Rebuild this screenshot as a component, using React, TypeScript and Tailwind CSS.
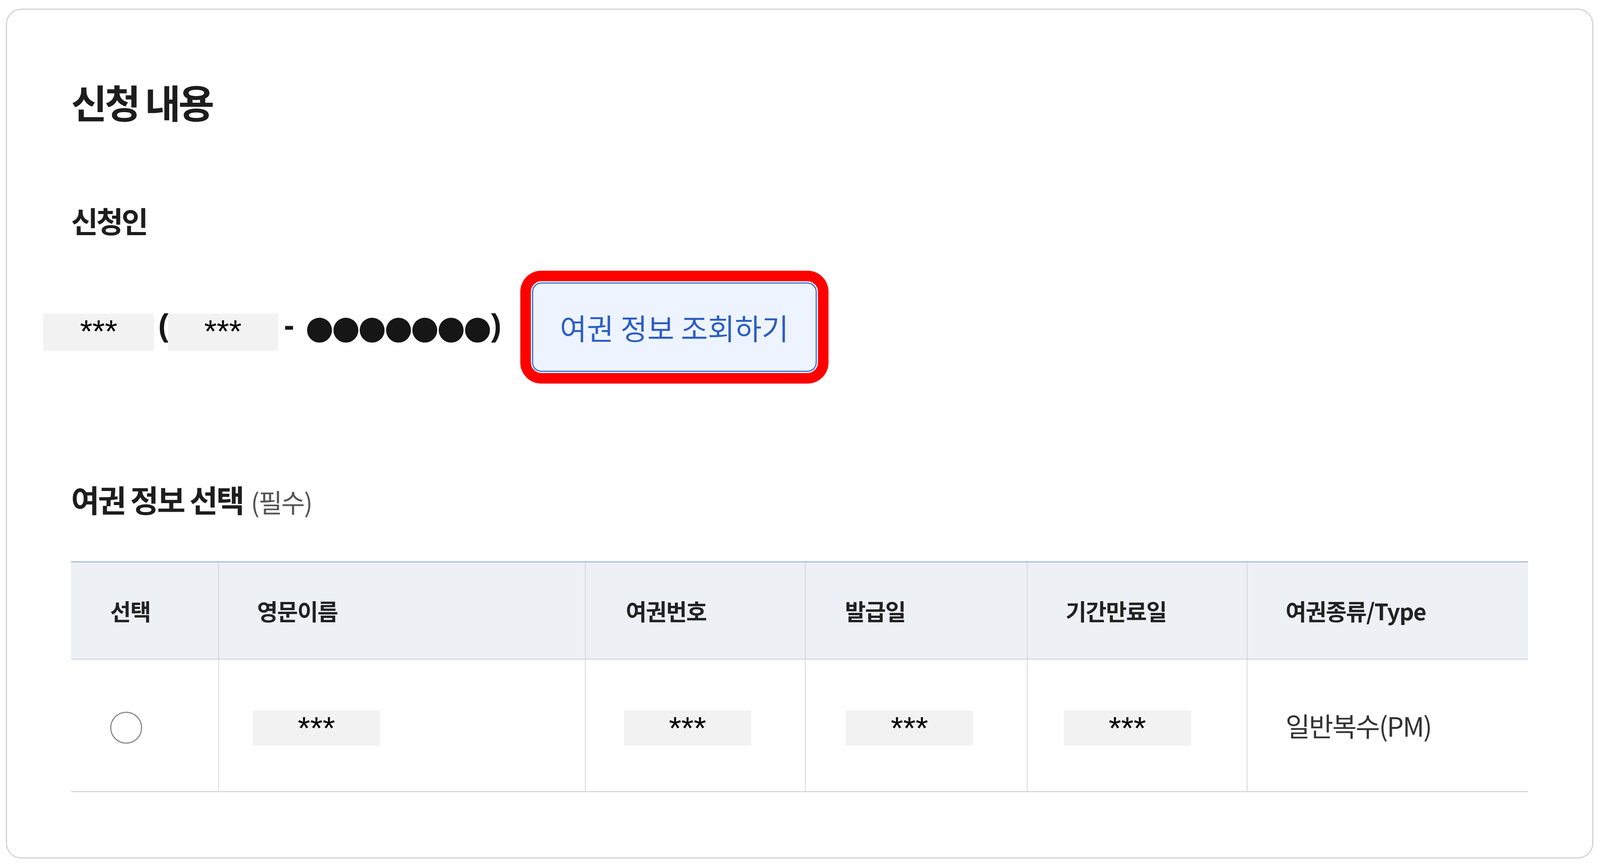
import React from "react"

const columns = [
  { label: "선택", headPad: "pl-[100px]" },
  { label: "영문이름", headPad: "pl-[97px]" },
  { label: "여권번호", headPad: "pl-[102px]" },
  { label: "발급일", headPad: "pl-[100px]" },
  { label: "기간만료일", headPad: "pl-[97px]" },
  { label: "여권종류/Type", headPad: "pl-[97px]" },
]

const gridCols = "grid grid-cols-[376px_939px_563px_568px_563px_1fr]"

// masked value placeholder (grey box with ***)
function Masked({ className }: { className: string }) {
  return (
    <div
      className={`bg-[#f2f2f2] text-center font-['Liberation_Sans',sans-serif] text-[82px] leading-[90px] text-black ${className}`}
    >
      ***
    </div>
  )
}

export default function App() {
  return (
    <div className="min-h-screen bg-white pt-[22px] pl-[15px] pr-[17px] pb-[19px] font-['Noto_Sans_CJK_KR',sans-serif] text-[#1d1d1d]">
      <section className="rounded-[40px] border-[3px] border-[#d2d2d2] pl-[164px] pr-[164px] pt-[185px] pb-[167px]">
        <h1 className="text-[100px] font-bold leading-none tracking-[-0.06em]">신청 내용</h1>

        <h2 className="mt-[216px] text-[75px] font-bold leading-none tracking-[-0.06em]">신청인</h2>

        {/* applicant row */}
        <div className="mt-[122px] -ml-[71px] flex h-[229px] items-center text-[#161616]">
          <Masked className="mt-[26px] h-[95px] w-[283px]" />
          <span className="ml-[11px] -mt-[10px] font-['Liberation_Sans',sans-serif] text-[80px] font-bold leading-none">(</span>
          <Masked className="-ml-[2px] mt-[26px] h-[95px] w-[282px]" />
          <span className="ml-[15px] -mt-[10px] font-['Liberation_Sans',sans-serif] text-[80px] font-bold leading-none">-</span>
          <span className="ml-[20px] -mt-[4px] font-['Liberation_Sans',sans-serif] text-[148px] leading-none tracking-[-22px]">●●●●●●●</span>
          <span className="ml-[12px] -mt-[10px] font-['Liberation_Sans',sans-serif] text-[80px] font-bold leading-none">)</span>
          <button className="ml-[78px] h-[229px] w-[729px] shrink-0 rounded-[24px] border-[3px] border-[#3d70d9] bg-[#eef4ff] text-[75px] leading-none text-[#2d5ec4] shadow-[0_0_0_3px_#ffffff,0_0_0_30px_#ff0000]">
            여권 정보 조회하기
          </button>
        </div>

        <div className="mt-[286px] flex items-baseline">
          <h2 className="text-[79px] font-bold leading-none tracking-[-0.05em]">여권 정보 선택</h2>
          <span className="ml-[20px] text-[66px] leading-none tracking-[-0.04em] text-[#555]">(필수)</span>
        </div>

        {/* passport table */}
        <div className="mt-[120px]">
          <div className={`${gridCols} h-[252px] border-t-[3px] border-b-[3px] border-t-[#a9bcd5] border-b-[#d8dbdf] bg-[#edf1f5]`}>
            {columns.map((c, i) => (
              <div
                key={c.label}
                className={`flex items-center ${c.headPad} text-[58px] font-bold tracking-[-0.03em] text-[#222] ${i > 0 ? "border-l-[3px] border-[#dadde2]" : ""}`}
              >
                {c.label}
              </div>
            ))}
          </div>
          <div className={`${gridCols} h-[339px] border-b-[3px] border-[#d9d9d9]`}>
            <div className="flex items-center pl-[100px]">
              <span className="mt-[12px] block h-[82px] w-[82px] rounded-full border-[3px] border-[#8a8a8a] bg-white" />
            </div>
            <div className="flex items-center border-l-[3px] border-[#e0e2e5] pl-[86px]">
              <Masked className="mt-[14px] h-[90px] w-[326px]" />
            </div>
            <div className="flex items-center border-l-[3px] border-[#e0e2e5] pl-[97px]">
              <Masked className="mt-[14px] h-[90px] w-[326px]" />
            </div>
            <div className="flex items-center border-l-[3px] border-[#e0e2e5] pl-[102px]">
              <Masked className="mt-[14px] h-[90px] w-[326px]" />
            </div>
            <div className="flex items-center border-l-[3px] border-[#e0e2e5] pl-[92px]">
              <Masked className="mt-[14px] h-[90px] w-[326px]" />
            </div>
            <div className="flex items-center border-l-[3px] border-[#e0e2e5] pl-[97px] text-[68px] tracking-[-0.04em] text-[#333]">
              일반복수(PM)
            </div>
          </div>
        </div>
      </section>
    </div>
  )
}
